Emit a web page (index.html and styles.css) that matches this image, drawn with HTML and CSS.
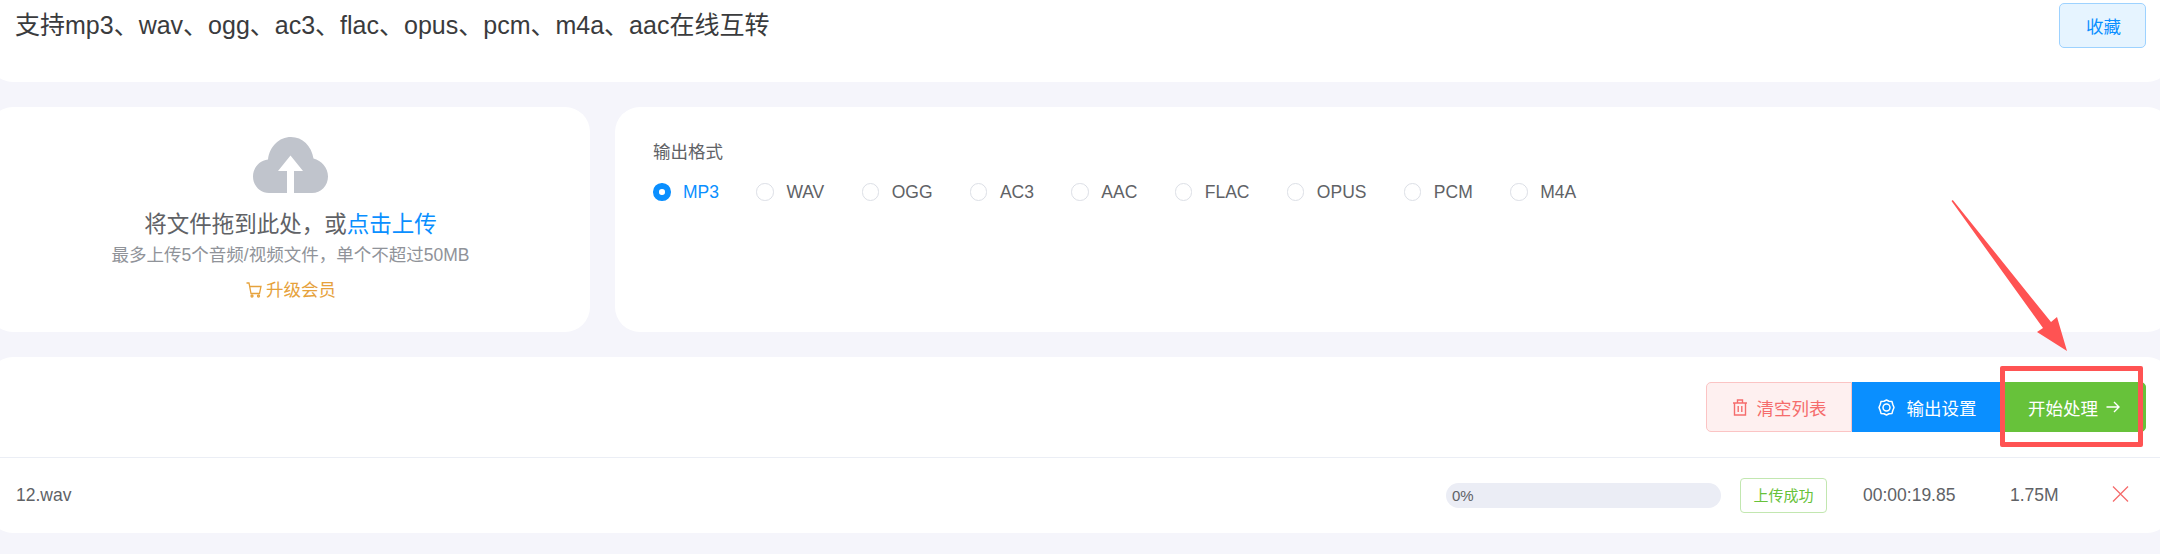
FILE: index.html
```html
<!DOCTYPE html>
<html lang="en">
<head>
  <meta charset="UTF-8">
  <meta name="viewport" content="width=device-width, initial-scale=1">
  <title>音频格式转换</title>
  <link rel="stylesheet" href="styles.css">
</head>
<body>

<div class="page">
  <div class="card head">
    <h1 class="head-title">支持mp3、wav、ogg、ac3、flac、opus、pcm、m4a、aac在线互转</h1>
    <button class="btn-fav">收藏</button>
  </div>

  <div class="row">
    <div class="card upload">
      <svg class="upload-icon" viewBox="0 0 75 56" width="75" height="56">
        <path fill="#c0c4cc" d="M16 56C7 56 0 48.500 0 39.500C0 30.500 6.500 23.500 15 22.500C16.500 9.500 26 0 38 0C49.500 0 58.500 9 60.500 21.500C68.500 23.500 75 30.500 75 39.500C75 48.500 68 56 59 56H41V34H50L37.500 18.500L25 34H34V56Z"/>
      </svg>
      <div class="upload-main">将文件拖到此处，或<span class="link">点击上传</span></div>
      <div class="upload-sub">最多上传5个音频/视频文件，单个不超过50MB</div>
      <div class="upload-vip">
        <svg viewBox="0 0 17 16" width="17" height="16" fill="none" stroke="#e6a23c" stroke-width="1.300">
          <path d="M0.500 1H3L5 11.500H13.500L15 4.500H3.600"/>
          <circle cx="6" cy="14" r="1"/>
          <circle cx="12.500" cy="14" r="1"/>
        </svg>
        升级会员
      </div>
    </div>

    <div class="card format">
      <div class="format-label">输出格式</div>
      <div class="radios">
        <label class="radio active"><i></i>MP3</label>
        <label class="radio"><i></i>WAV</label>
        <label class="radio"><i></i>OGG</label>
        <label class="radio"><i></i>AC3</label>
        <label class="radio"><i></i>AAC</label>
        <label class="radio"><i></i>FLAC</label>
        <label class="radio"><i></i>OPUS</label>
        <label class="radio"><i></i>PCM</label>
        <label class="radio"><i></i>M4A</label>
      </div>
    </div>
  </div>

  <div class="card list">
    <div class="toolbar">
      <button class="btn btn-clear">
        <svg viewBox="0 0 16 17" width="16" height="17" fill="none" stroke="#f56c6c" stroke-width="1.400">
          <path d="M1 4H15M5.500 4V1H10.500V4M2.500 4V16H13.500V4M6.200 7V13M9.800 7V13"/>
        </svg>
        清空列表
      </button>
      <button class="btn btn-set">
        <svg viewBox="0 0 17 17" width="17" height="17" fill="none" stroke="#fff">
          <path stroke-width="1.500" d="M8.500 1L11 2.200L14 2.600L14.700 5.300L16 8.500L14.700 11.700L14 14.400L11 14.800L8.500 16L6 14.800L3 14.400L2.300 11.700L1 8.500L2.300 5.300L3 2.600L6 2.200Z" stroke-linejoin="round"/>
          <circle cx="8.500" cy="8.500" r="3.500" stroke-width="1.500"/>
        </svg>
        输出设置
      </button>
      <button class="btn btn-start">
        开始处理
        <svg viewBox="0 0 14 12" width="14" height="12" fill="none" stroke="#fff" stroke-width="1.400">
          <path d="M0.500 6H13M8 1L13 6L8 11"/>
        </svg>
      </button>
    </div>

    <div class="file">
      <div class="file-name">12.wav</div>
      <div class="progress">0%</div>
      <div class="tag">上传成功</div>
      <div class="file-time">00:00:19.85</div>
      <div class="file-size">1.75M</div>
      <svg class="file-del" viewBox="0 0 17 16" width="17" height="16" fill="none" stroke="#f56c6c" stroke-width="1.300">
        <path d="M1 0.500L16 15.500M16 0.500L1 15.500"/>
      </svg>
    </div>
  </div>
</div>

<!-- red annotation drawn on top of the screenshot -->
<svg class="mark-arrow" viewBox="0 0 125 160" width="125" height="160">
  <path fill="#ff5353" d="M2.800 0L101 122L107 117L117 151L87 132L93 128L1.500 1Z"/>
</svg>
<div class="mark-box"></div>

</body>
</html>
```

FILE: styles.css
```css
*, *::before, *::after {
  box-sizing: border-box;
}

html, body {
  height: 554px;
  overflow: hidden;
}

body {
  font-family: "Liberation Sans", "Noto Sans CJK SC", sans-serif;
  font-size: 17.5px;
  color: #606266;
  background-color: #f5f5fb;
  margin: 0;
  position: relative;
}

button {
  font-family: inherit;
  font-size: inherit;
  cursor: pointer;
}

.page {
  margin: 0 -12px;
}

.card {
  background-color: #ffffff;
  border-radius: 25px;
}

.head {
  height: 82px;
  border-radius: 0 0 25px 25px;
  padding: 3px 26px 0 27px;
  display: flex;
  justify-content: space-between;
  align-items: flex-start;
}

.head-title {
  margin: 0;
  font-size: 25px;
  font-weight: normal;
  line-height: 44px;
  color: #3a3b3d;
}

.btn-fav {
  width: 87px;
  height: 45px;
  padding: 0 0 0 2px;
  color: #0a8fff;
  background: #e6f4ff;
  border: 1px solid #9dd2ff;
  border-radius: 5px;
}

.row {
  display: flex;
  gap: 25px;
  margin-top: 25px;
}

.upload {
  width: 602px;
  height: 225px;
  padding: 30px 0 0 3px;
  display: flex;
  flex-direction: column;
  align-items: center;
  flex: none;
}

.upload-icon {
  display: block;
}

.upload-main {
  margin-top: 16px;
  font-size: 22.500px;
  line-height: 32px;
}

.link {
  color: #0a8fff;
}

.upload-sub {
  line-height: 28px;
  color: #909399;
}

.upload-vip {
  margin-top: 1px;
  padding-left: 1px;
  line-height: 40px;
  color: #e6a23c;
  display: flex;
  align-items: center;
  gap: 3px;
}

.format {
  flex: 1;
  height: 225px;
  padding: 32px 0 0 38px;
}

.format-label {
  line-height: 26px;
}

.radios {
  display: flex;
  margin-top: 14px;
  gap: 37.400px;
}

.radio {
  display: flex;
  align-items: center;
  gap: 12.500px;
  line-height: 26px;
}

.radio i {
  width: 17.500px;
  height: 17.500px;
  border: 1px solid #dcdfe6;
  border-radius: 50%;
  background: #fff;
}

.radio.active {
  color: #0a8fff;
}

.radio.active i {
  border: 6px solid #0a8fff;
}

.list {
  margin-top: 25px;
  height: 176px;
}

.toolbar {
  height: 101px;
  padding: 25px 26px 0 0;
  border-bottom: 1px solid #ebeef5;
  display: flex;
  justify-content: flex-end;
  align-items: flex-start;
}

.btn {
  height: 50px;
  padding: 0;
  border: 1px solid transparent;
  display: flex;
  align-items: center;
  justify-content: center;
  gap: 9px;
  color: #fff;
  white-space: nowrap;
}

.btn svg {
  flex: none;
}

.btn-clear {
  width: 146px;
  color: #f56c6c;
  background: #fef0f0;
  border-color: #fbc4c4;
  border-radius: 5px 0 0 5px;
}

.btn-set {
  width: 150px;
  background: #0a8fff;
  border-color: #0a8fff;
  gap: 12px;
}

.btn-start {
  width: 144px;
  background: #67c23a;
  border-color: #67c23a;
  border-radius: 0 5px 5px 0;
  gap: 8px;
}

.file {
  height: 75px;
  display: flex;
  align-items: center;
  padding-left: 28px;
}

.file-name {
  width: 1430px;
}

.progress {
  width: 275px;
  height: 25px;
  line-height: 25px;
  padding-left: 6px;
  font-size: 15px;
  background: #ebedf5;
  border-radius: 13px;
}

.tag {
  width: 87px;
  height: 35px;
  line-height: 33px;
  margin-left: 19px;
  text-align: center;
  font-size: 15px;
  color: #67c23a;
  background: #fff;
  border: 1px solid #c2e7b0;
  border-radius: 4px;
}

.file-time {
  margin-left: 36px;
  width: 147px;
}

.file-size {
  width: 102px;
}

.file-del {
  margin-top: -4px;
}

.mark-arrow {
  position: absolute;
  left: 1950px;
  top: 200px;
}

.mark-box {
  position: absolute;
  left: 2000px;
  top: 366px;
  width: 143px;
  height: 81px;
  border: 5px solid #ff5353;
  border-radius: 2px;
}
```
